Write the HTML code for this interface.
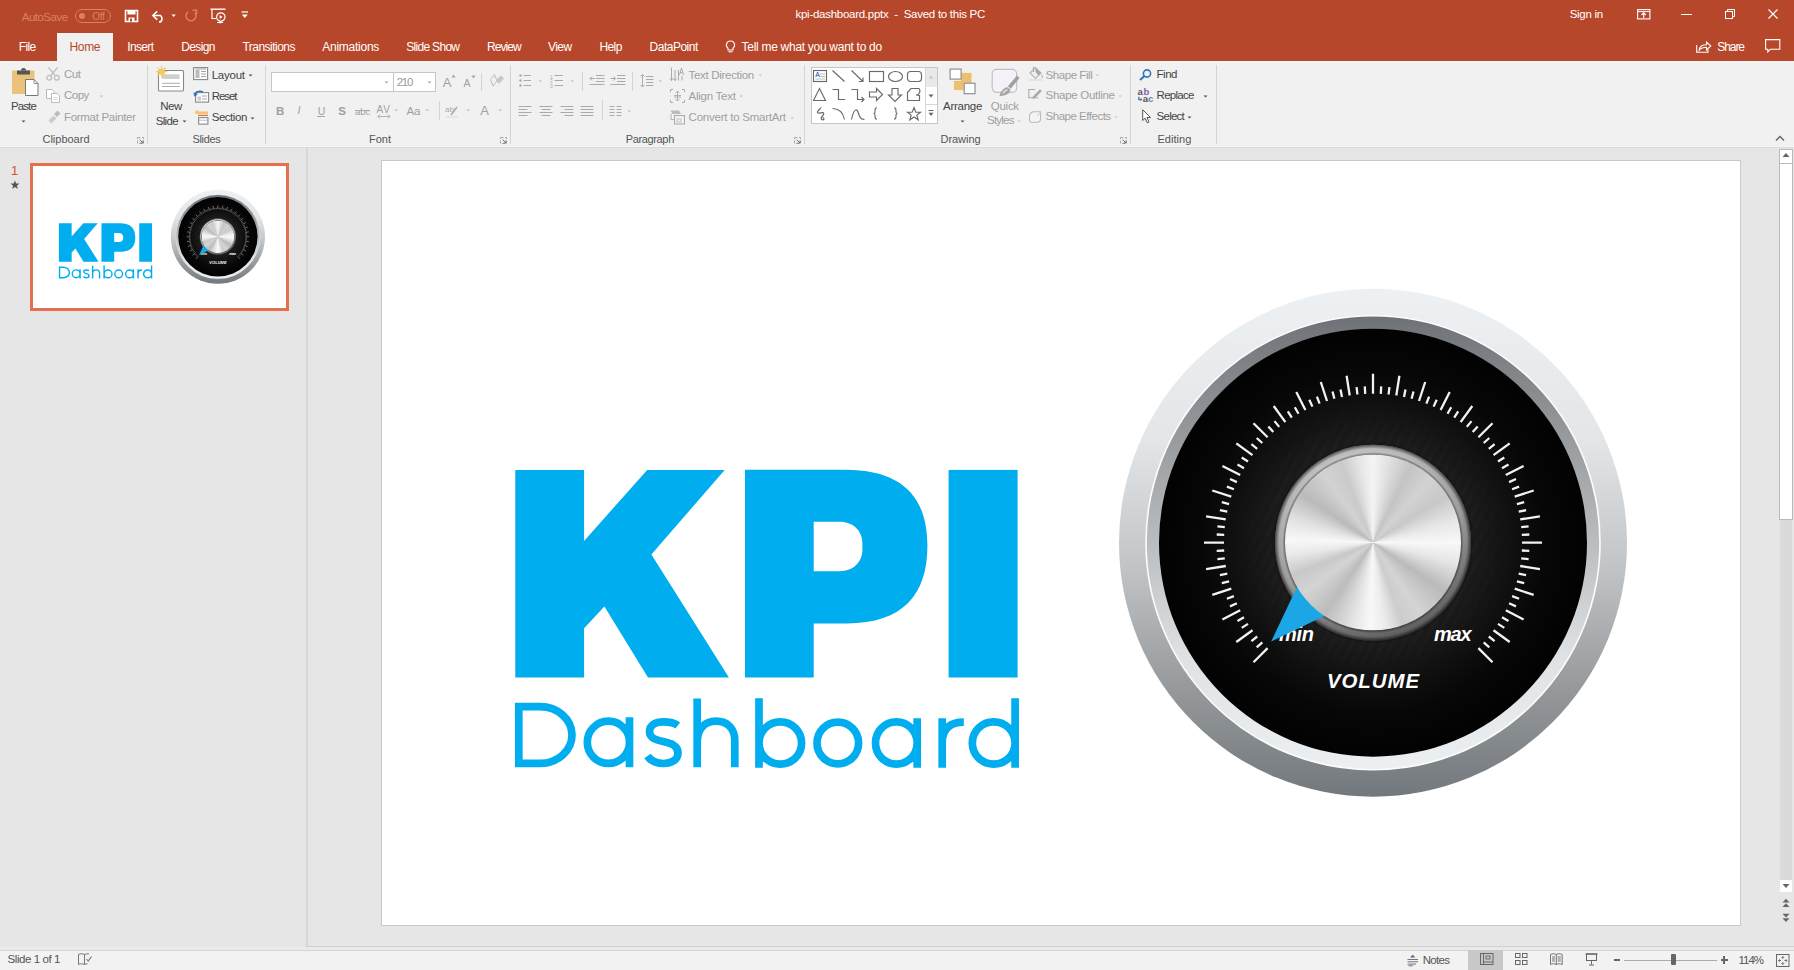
<!DOCTYPE html><html><head><meta charset="utf-8"><style>
*{margin:0;padding:0;box-sizing:border-box}
html,body{width:1794px;height:970px;overflow:hidden;background:#e6e6e6;font-family:"Liberation Sans",sans-serif;font-size:11px;color:#444}
.a{position:absolute;white-space:nowrap}
svg.a{overflow:visible}
</style></head><body><div class="a" style="left:0;top:0;width:1794px;height:61px;background:#b7472a"></div>
<div class="a" style="left:21.8px;top:11.8px;font-size:11.5px;line-height:11.5px;color:#d98166;letter-spacing:-0.52px;">AutoSave</div>
<div class="a" style="left:75px;top:8.5px;width:35.5px;height:14.5px;border:1px solid #d98166;border-radius:8px"></div>
<div class="a" style="left:78.6px;top:12.5px;width:6.5px;height:6.5px;border-radius:50%;background:#d98166"></div>
<div class="a" style="left:92.2px;top:11.9px;font-size:10px;line-height:10px;color:#d98166;letter-spacing:-0.22px;">Off</div>
<svg class="a" style="left:124px;top:9px" width="15" height="14" viewBox="0 0 15 14" ><path d="M1.5,1.5H13.5V12.5H1.5Z" fill="none" stroke="#fff" stroke-width="1.6"/><rect x="3.5" y="1.5" width="8" height="4" fill="#fff"/><rect x="4.5" y="8.5" width="6" height="4" fill="#fff"/><rect x="6" y="9.5" width="2" height="3" fill="#b7472a"/></svg>
<svg class="a" style="left:151px;top:9px" width="27" height="14" viewBox="0 0 27 14" ><path d="M3,6.5H9.5A4.2,4.2 0 0 1 9.5,12.9H8" fill="none" stroke="#fff" stroke-width="1.6"/><path d="M6.2,2.3L1.8,6.5L6.2,10.7" fill="none" stroke="#fff" stroke-width="1.6"/><path d="M20.5,5.5H24.8L22.65,8Z" fill="#fff"/></svg>
<svg class="a" style="left:184px;top:9px" width="14" height="13" viewBox="0 0 14 13" ><path d="M10.8,3.5A5,5 0 1 1 4,2.8" fill="none" stroke="#d98166" stroke-width="1.5"/><path d="M8.5,1.2H12.5V5" fill="none" stroke="#d98166" stroke-width="1.5"/></svg>
<svg class="a" style="left:210px;top:8px" width="17" height="17" viewBox="0 0 17 17" ><path d="M0.5,1.2H15.5" stroke="#fff" stroke-width="1.4"/><path d="M2,1.5V10.5H6" fill="none" stroke="#fff" stroke-width="1.2"/><circle cx="10.8" cy="9" r="4.2" fill="none" stroke="#fff" stroke-width="1.2"/><path d="M9.6,6.9V11.1L12.6,9Z" fill="#fff"/><path d="M7,14.5H13M10,13V15.5" stroke="#fff" stroke-width="1.1"/></svg>
<svg class="a" style="left:241px;top:11px" width="8" height="8" viewBox="0 0 8 8" ><path d="M0.5,1H7" stroke="#fff" stroke-width="1.2"/><path d="M0.8,3.5H6.8L3.8,7Z" fill="#fff"/></svg>
<div class="a" style="left:795.5px;top:9.3px;font-size:11.5px;line-height:11.5px;color:#fff;letter-spacing:-0.27px;">kpi-dashboard.pptx&nbsp; -&nbsp; Saved to this PC</div>
<div class="a" style="left:1569.7px;top:9.3px;font-size:11.5px;line-height:11.5px;color:#fff;letter-spacing:-0.29px;">Sign in</div>
<svg class="a" style="left:1636.5px;top:9px" width="14" height="11" viewBox="0 0 14 11" ><rect x="0.6" y="0.6" width="12.3" height="9.3" fill="none" stroke="#fff" stroke-width="1.1"/><path d="M0.6,2.6H12.9" stroke="#fff" stroke-width="1"/><path d="M6.7,4V9M4.5,6L6.7,3.8L8.9,6" fill="none" stroke="#fff" stroke-width="1.1"/></svg>
<div class="a" style="left:1681px;top:13.5px;width:10.5px;height:1px;background:#fff"></div>
<svg class="a" style="left:1724.5px;top:9px" width="11" height="10" viewBox="0 0 11 10" ><rect x="0.5" y="2.5" width="7" height="7" fill="none" stroke="#fff" stroke-width="1"/><path d="M2.5,2.5V0.5H9.5V7.5H7.5" fill="none" stroke="#fff" stroke-width="1"/></svg>
<svg class="a" style="left:1767.5px;top:9px" width="10" height="10" viewBox="0 0 10 10" ><path d="M0.5,0.5L9.5,9.5M9.5,0.5L0.5,9.5" stroke="#fff" stroke-width="1.1"/></svg>
<div class="a" style="left:57px;top:33px;width:56px;height:29px;background:#f1f1f1"></div>
<div class="a" style="left:18.8px;top:41.2px;font-size:12px;line-height:12px;color:#fff;letter-spacing:-0.64px;">File</div>
<div class="a" style="left:69.5px;top:41.2px;font-size:12px;line-height:12px;color:#b7472a;letter-spacing:-0.35px;">Home</div>
<div class="a" style="left:127.2px;top:41.2px;font-size:12px;line-height:12px;color:#fff;letter-spacing:-0.64px;">Insert</div>
<div class="a" style="left:181.3px;top:41.2px;font-size:12px;line-height:12px;color:#fff;letter-spacing:-0.66px;">Design</div>
<div class="a" style="left:242.5px;top:41.2px;font-size:12px;line-height:12px;color:#fff;letter-spacing:-0.53px;">Transitions</div>
<div class="a" style="left:322.3px;top:41.2px;font-size:12px;line-height:12px;color:#fff;letter-spacing:-0.26px;">Animations</div>
<div class="a" style="left:406.3px;top:41.2px;font-size:12px;line-height:12px;color:#fff;letter-spacing:-0.70px;">Slide Show</div>
<div class="a" style="left:487.0px;top:41.2px;font-size:12px;line-height:12px;color:#fff;letter-spacing:-0.95px;">Review</div>
<div class="a" style="left:548.0px;top:41.2px;font-size:12px;line-height:12px;color:#fff;letter-spacing:-0.57px;">View</div>
<div class="a" style="left:599.4px;top:41.2px;font-size:12px;line-height:12px;color:#fff;letter-spacing:-0.59px;">Help</div>
<div class="a" style="left:649.6px;top:41.2px;font-size:12px;line-height:12px;color:#fff;letter-spacing:-0.51px;">DataPoint</div>
<svg class="a" style="left:724.5px;top:39.5px" width="11" height="14" viewBox="0 0 11 14" ><path d="M5.5,1A4,4 0 0 0 3,8.2V10H8V8.2A4,4 0 0 0 5.5,1Z" fill="none" stroke="#fff" stroke-width="1.1"/><path d="M3.5,11.8H7.5" stroke="#fff" stroke-width="1.1"/></svg>
<div class="a" style="left:741.6px;top:41.2px;font-size:12px;line-height:12px;color:#fff;letter-spacing:-0.29px;">Tell me what you want to do</div>
<svg class="a" style="left:1695.5px;top:39.5px" width="16" height="13" viewBox="0 0 16 13" ><path d="M0.7,5V12.3H12V9.5" fill="none" stroke="#fff" stroke-width="1.1"/><path d="M3.2,10.2C3.5,6.5 6.5,4.8 10.5,4.8V2L14.8,6L10.5,10V7.2C7.5,7.2 5,8 3.2,10.2Z" fill="none" stroke="#fff" stroke-width="1.1"/></svg>
<div class="a" style="left:1717.3px;top:40.7px;font-size:12px;line-height:12px;color:#fff;letter-spacing:-1.07px;">Share</div>
<svg class="a" style="left:1765px;top:39px" width="16" height="14" viewBox="0 0 16 14" ><path d="M0.6,0.6H14.8V10.2H5.5L2.8,13V10.2H0.6Z" fill="none" stroke="#fff" stroke-width="1.1"/></svg>
<div class="a" style="left:0;top:61px;width:1794px;height:85px;background:#f1f1f1"></div>
<div class="a" style="left:0;top:145.5px;width:1794px;height:1.5px;background:#f6f6f6"></div>
<div class="a" style="left:0;top:147px;width:1794px;height:1px;background:#d9d9d9"></div>
<div class="a" style="left:147px;top:65px;width:1px;height:79px;background:#d4d4d4"></div>
<div class="a" style="left:265px;top:65px;width:1px;height:79px;background:#d4d4d4"></div>
<div class="a" style="left:510px;top:65px;width:1px;height:79px;background:#d4d4d4"></div>
<div class="a" style="left:804px;top:65px;width:1px;height:79px;background:#d4d4d4"></div>
<div class="a" style="left:1130px;top:65px;width:1px;height:79px;background:#d4d4d4"></div>
<div class="a" style="left:1216px;top:65px;width:1px;height:79px;background:#d4d4d4"></div>
<div class="a" style="left:42.5px;top:134.0px;font-size:11px;line-height:11px;color:#555;letter-spacing:-0.01px;">Clipboard</div>
<div class="a" style="left:192.5px;top:134.0px;font-size:11px;line-height:11px;color:#555;letter-spacing:-0.36px;">Slides</div>
<div class="a" style="left:369.0px;top:134.0px;font-size:11px;line-height:11px;color:#555;letter-spacing:-0.00px;">Font</div>
<div class="a" style="left:625.7px;top:134.0px;font-size:11px;line-height:11px;color:#555;letter-spacing:-0.35px;">Paragraph</div>
<div class="a" style="left:940.5px;top:134.0px;font-size:11px;line-height:11px;color:#555;letter-spacing:-0.04px;">Drawing</div>
<div class="a" style="left:1157.4px;top:134.0px;font-size:11px;line-height:11px;color:#555;letter-spacing:0.04px;">Editing</div>
<svg class="a" style="left:136.5px;top:136.5px" width="7" height="7" viewBox="0 0 7 7"><path d="M0.5,0.5H6.5V6.5H0.5Z" fill="none" stroke="#999" stroke-width="0.8" stroke-dasharray="3 1.5"/><path d="M2.5,2.5L6,6M3.5,6H6V3.5" fill="none" stroke="#777" stroke-width="1"/></svg>
<svg class="a" style="left:499.5px;top:136.5px" width="7" height="7" viewBox="0 0 7 7"><path d="M0.5,0.5H6.5V6.5H0.5Z" fill="none" stroke="#999" stroke-width="0.8" stroke-dasharray="3 1.5"/><path d="M2.5,2.5L6,6M3.5,6H6V3.5" fill="none" stroke="#777" stroke-width="1"/></svg>
<svg class="a" style="left:794px;top:136.5px" width="7" height="7" viewBox="0 0 7 7"><path d="M0.5,0.5H6.5V6.5H0.5Z" fill="none" stroke="#999" stroke-width="0.8" stroke-dasharray="3 1.5"/><path d="M2.5,2.5L6,6M3.5,6H6V3.5" fill="none" stroke="#777" stroke-width="1"/></svg>
<svg class="a" style="left:1120px;top:136.5px" width="7" height="7" viewBox="0 0 7 7"><path d="M0.5,0.5H6.5V6.5H0.5Z" fill="none" stroke="#999" stroke-width="0.8" stroke-dasharray="3 1.5"/><path d="M2.5,2.5L6,6M3.5,6H6V3.5" fill="none" stroke="#777" stroke-width="1"/></svg>
<svg class="a" style="left:11px;top:67px" width="29" height="30" viewBox="0 0 29 30"><rect x="1" y="3.5" width="22.5" height="23.5" rx="1" fill="#eac27a"/><path d="M6,3.5H19V7.5H6Z" fill="#555"/><path d="M10,3.5A2.5,2.5 0 0 1 15,3.5" fill="#555"/><path d="M14.5,12.5H23L27,16.5V28.5H14.5Z" fill="#fff" stroke="#777" stroke-width="1"/><path d="M23,12.5V16.5H27" fill="none" stroke="#777" stroke-width="0.8"/></svg>
<div class="a" style="left:10.9px;top:100.6px;font-size:11.5px;line-height:11.5px;color:#444;letter-spacing:-0.87px;">Paste</div>
<svg class="a" style="left:20.5px;top:119.8px" width="5.0" height="4.0" viewBox="0 0 5.0 4.0"><path d="M0.5,0.5H4.5L2.50,2.60Z" fill="#555"/></svg>
<svg class="a" style="left:46px;top:66.5px" width="15" height="14" viewBox="0 0 15 14"><circle cx="3.2" cy="10.8" r="2.4" fill="none" stroke="#bbb" stroke-width="1.2"/><circle cx="10.8" cy="10.8" r="2.4" fill="none" stroke="#bbb" stroke-width="1.2"/><path d="M4.5,8.8L11.5,0.5M9.5,8.8L2.5,0.5" stroke="#bbb" stroke-width="1.2"/></svg>
<div class="a" style="left:64.0px;top:69.2px;font-size:11.5px;line-height:11.5px;color:#9f9f9f;letter-spacing:-0.48px;">Cut</div>
<svg class="a" style="left:46px;top:88.5px" width="15" height="14" viewBox="0 0 15 14"><path d="M0.5,0.5H6L8,2.5V9.5H0.5Z" fill="#fff" stroke="#bbb" stroke-width="1"/><path d="M5.5,4.5H11.5L13.5,6.5V13.5H5.5Z" fill="#fff" stroke="#bbb" stroke-width="1"/><path d="M7.5,8.5H11.5M7.5,10.5H11.5" stroke="#ccc" stroke-width="0.8"/></svg>
<div class="a" style="left:64.0px;top:90.1px;font-size:11.5px;line-height:11.5px;color:#9f9f9f;letter-spacing:-0.53px;">Copy</div>
<svg class="a" style="left:98.8px;top:94.6px" width="5.0" height="4.0" viewBox="0 0 5.0 4.0"><path d="M0.5,0.5H4.5L2.50,2.60Z" fill="#c4c4c4"/></svg>
<svg class="a" style="left:47px;top:110px" width="14" height="13" viewBox="0 0 14 13"><path d="M1.5,10.5L6.5,5.5L9.5,8.5L4.5,13.5Z" fill="#ccc"/><path d="M7,4L10.5,0.5L13.5,3.5L10,7Z" fill="#bbb"/></svg>
<div class="a" style="left:64.0px;top:111.8px;font-size:11.5px;line-height:11.5px;color:#9f9f9f;letter-spacing:-0.31px;">Format Painter</div>
<svg class="a" style="left:153px;top:65px" width="33" height="28" viewBox="0 0 33 28"><rect x="5.5" y="5.5" width="25" height="20.5" rx="1" fill="#fff" stroke="#888" stroke-width="1.1"/><rect x="9" y="9.3" width="17.5" height="4.7" fill="#cfcfcf"/><path d="M9,18.3H27M9,21.5H27" stroke="#999" stroke-width="0.8"/><circle cx="8.6" cy="6.7" r="3.3" fill="#f3c96a"/><path d="M8.6,0.8V12.6M2.7,6.7H14.5M4.4,2.5L12.8,10.9M12.8,2.5L4.4,10.9" stroke="#f3c96a" stroke-width="1.1"/></svg>
<div class="a" style="left:160.2px;top:100.5px;font-size:11.5px;line-height:11.5px;color:#444;letter-spacing:-0.40px;">New</div>
<div class="a" style="left:155.8px;top:115.7px;font-size:11.5px;line-height:11.5px;color:#444;letter-spacing:-0.70px;">Slide</div>
<svg class="a" style="left:181.7px;top:119.8px" width="5.0" height="4.0" viewBox="0 0 5.0 4.0"><path d="M0.5,0.5H4.5L2.50,2.60Z" fill="#555"/></svg>
<svg class="a" style="left:193px;top:67px" width="16" height="14" viewBox="0 0 16 14"><rect x="0.6" y="0.6" width="14" height="12" fill="#fff" stroke="#888" stroke-width="1.1"/><rect x="2.5" y="3" width="4" height="8" fill="#bbb"/><path d="M2.5,2H13M8,4.5H13M8,7H13M8,9.5H13" stroke="#999" stroke-width="0.9"/></svg>
<div class="a" style="left:211.7px;top:69.5px;font-size:11.5px;line-height:11.5px;color:#444;letter-spacing:-0.24px;">Layout</div>
<svg class="a" style="left:248.0px;top:74.3px" width="5.0" height="4.0" viewBox="0 0 5.0 4.0"><path d="M0.5,0.5H4.5L2.50,2.60Z" fill="#555"/></svg>
<svg class="a" style="left:192.5px;top:88.5px" width="17" height="14" viewBox="0 0 17 14"><rect x="2.6" y="3.6" width="13" height="9.5" fill="#fff" stroke="#888" stroke-width="1.1"/><path d="M9,7H14M9,10H14" stroke="#999" stroke-width="0.9"/><rect x="4.5" y="7.5" width="3.5" height="4" fill="#ccc"/><path d="M1.5,6.5A5.5,4.5 0 0 1 10,3" fill="none" stroke="#2e75b6" stroke-width="1.6"/><path d="M0.3,3.5L1.8,7.8L5,5Z" fill="#2e75b6"/></svg>
<div class="a" style="left:211.7px;top:90.8px;font-size:11.5px;line-height:11.5px;color:#444;letter-spacing:-1.05px;">Reset</div>
<svg class="a" style="left:193.5px;top:109.5px" width="15" height="15" viewBox="0 0 15 15"><circle cx="2.8" cy="2.2" r="2" fill="#f3c96a"/><rect x="4" y="1.5" width="10" height="3" fill="#f0c27b"/><path d="M4,5.5H14" stroke="#d9534f" stroke-width="0.9"/><rect x="4.6" y="7.6" width="9.3" height="6.5" fill="#fff" stroke="#888" stroke-width="1.1"/><path d="M5,10.2H13.5" stroke="#aaa" stroke-width="0.8"/></svg>
<div class="a" style="left:211.7px;top:112.4px;font-size:11.5px;line-height:11.5px;color:#444;letter-spacing:-0.46px;">Section</div>
<svg class="a" style="left:250.3px;top:117.2px" width="5.0" height="4.0" viewBox="0 0 5.0 4.0"><path d="M0.5,0.5H4.5L2.50,2.60Z" fill="#555"/></svg>
<div class="a" style="left:270.5px;top:71.5px;width:123px;height:20.5px;background:#fff;border:1px solid #c6c6c6"></div>
<div class="a" style="left:392.5px;top:71.5px;width:43px;height:20.5px;background:#fff;border:1px solid #c6c6c6"></div>
<svg class="a" style="left:383.7px;top:80.5px" width="5.0" height="4.0" viewBox="0 0 5.0 4.0"><path d="M0.5,0.5H4.5L2.50,2.60Z" fill="#aaa"/></svg>
<svg class="a" style="left:426.9px;top:80.5px" width="5.0" height="4.0" viewBox="0 0 5.0 4.0"><path d="M0.5,0.5H4.5L2.50,2.60Z" fill="#aaa"/></svg>
<div class="a" style="left:396.7px;top:76.6px;font-size:11.5px;line-height:11.5px;color:#999;letter-spacing:-1.28px;">210</div>
<div class="a" style="left:442.7px;top:76.0px;font-size:13px;line-height:13px;color:#9f9f9f;">A</div>
<svg class="a" style="left:450.5px;top:74px" width="5" height="4" viewBox="0 0 5 4"><path d="M0.3,3.5L2.5,0.5L4.7,3.5Z" fill="#aaa"/></svg>
<div class="a" style="left:463.6px;top:78.1px;font-size:10.5px;line-height:10.5px;color:#9f9f9f;">A</div>
<svg class="a" style="left:470.5px;top:75px" width="5" height="4" viewBox="0 0 5 4"><path d="M0.3,0.5L2.5,3.5L4.7,0.5Z" fill="#aaa"/></svg>
<div class="a" style="left:481.4px;top:72.5px;width:1px;height:18.799999999999997px;background:#d4d4d4"></div>
<svg class="a" style="left:489.5px;top:74px" width="15" height="13" viewBox="0 0 15 13"><path d="M3,12L0.5,5.5L4.5,0.5L7,7Z" fill="none" stroke="#bbb" stroke-width="1"/><path d="M6,6L11,1.5L14,4.5L9,10Z" fill="#c8c8c8"/></svg>
<div class="a" style="left:276.1px;top:105.6px;font-size:11.5px;line-height:11.5px;color:#9f9f9f;font-weight:bold;">B</div>
<div class="a" style="left:297.5px;top:105.4px;font-size:11px;line-height:11px;color:#9f9f9f;font-style:italic">I</div>
<div class="a" style="left:317.8px;top:105.9px;font-size:10.5px;line-height:10.5px;color:#9f9f9f;">U</div>
<div class="a" style="left:317.3px;top:115.5px;width:7.6px;height:1px;background:#aaa"></div>
<div class="a" style="left:338.2px;top:105.6px;font-size:11.5px;line-height:11.5px;color:#9f9f9f;font-weight:bold;">S</div>
<div class="a" style="left:354.9px;top:106.8px;font-size:9.5px;line-height:9.5px;color:#9f9f9f;letter-spacing:-0.01px;">abc</div>
<div class="a" style="left:354.5px;top:109.5px;width:15.5px;height:1px;background:#aaa"></div>
<div class="a" style="left:376.5px;top:104.8px;font-size:10px;line-height:10px;color:#9f9f9f;letter-spacing:0.87px;">AV</div>
<svg class="a" style="left:376.5px;top:113.5px" width="14" height="5" viewBox="0 0 14 5"><path d="M1,2.5H13M3,0.5L1,2.5L3,4.5M11,0.5L13,2.5L11,4.5" fill="none" stroke="#aaa" stroke-width="0.9"/></svg>
<svg class="a" style="left:394.45px;top:108.8px" width="4.5" height="3.5" viewBox="0 0 4.5 3.5"><path d="M0.5,0.5H4.0L2.25,2.35Z" fill="#bbb"/></svg>
<div class="a" style="left:406.4px;top:105.6px;font-size:11.5px;line-height:11.5px;color:#9f9f9f;letter-spacing:-0.04px;">Aa</div>
<svg class="a" style="left:425.05px;top:108.8px" width="4.5" height="3.5" viewBox="0 0 4.5 3.5"><path d="M0.5,0.5H4.0L2.25,2.35Z" fill="#bbb"/></svg>
<div class="a" style="left:438.5px;top:101px;width:1px;height:19px;background:#d4d4d4"></div>
<svg class="a" style="left:445px;top:104.5px" width="14" height="14" viewBox="0 0 14 14"><text x="0" y="7" font-size="8" fill="#aaa" font-family="Liberation Sans">ab</text><path d="M6,10L12,2" stroke="#aaa" stroke-width="1.6"/><rect x="1" y="11" width="12" height="2" fill="#e4e4e4"/></svg>
<svg class="a" style="left:466.25px;top:108.8px" width="4.5" height="3.5" viewBox="0 0 4.5 3.5"><path d="M0.5,0.5H4.0L2.25,2.35Z" fill="#bbb"/></svg>
<div class="a" style="left:480.3px;top:104.3px;font-size:13px;line-height:13px;color:#9f9f9f;">A</div>
<svg class="a" style="left:498.25px;top:108.8px" width="4.5" height="3.5" viewBox="0 0 4.5 3.5"><path d="M0.5,0.5H4.0L2.25,2.35Z" fill="#bbb"/></svg>
<svg class="a" style="left:519px;top:74px" width="13" height="13" viewBox="0 0 13 13"><circle cx="1.5" cy="1.5" r="1.2" fill="#aaa"/><circle cx="1.5" cy="6.5" r="1.2" fill="#aaa"/><circle cx="1.5" cy="11.5" r="1.2" fill="#aaa"/><path d="M4.5,1.5H12M4.5,6.5H12M4.5,11.5H12" stroke="#aaa" stroke-width="1"/></svg>
<svg class="a" style="left:537.85px;top:80px" width="4.5" height="3.5" viewBox="0 0 4.5 3.5"><path d="M0.5,0.5H4.0L2.25,2.35Z" fill="#bbb"/></svg>
<svg class="a" style="left:550px;top:74px" width="14" height="14" viewBox="0 0 14 14"><text x="0" y="4.5" font-size="5" fill="#aaa">1</text><text x="0" y="9.2" font-size="5" fill="#aaa">2</text><text x="0" y="14" font-size="5" fill="#aaa">3</text><path d="M4.5,1.5H13M4.5,6.5H13M4.5,11.5H13" stroke="#aaa" stroke-width="1"/></svg>
<svg class="a" style="left:569.95px;top:80px" width="4.5" height="3.5" viewBox="0 0 4.5 3.5"><path d="M0.5,0.5H4.0L2.25,2.35Z" fill="#bbb"/></svg>
<div class="a" style="left:582.4px;top:72px;width:1px;height:19px;background:#d4d4d4"></div>
<svg class="a" style="left:589px;top:74px" width="16" height="13" viewBox="0 0 16 13"><path d="M7,1.5H15.5M7,4.5H15.5M7,7.5H15.5M0.5,10.5H15.5M1,4.5H6M3,2.5L1,4.5L3,6.5" fill="none" stroke="#aaa" stroke-width="1"/></svg>
<svg class="a" style="left:610px;top:74px" width="16" height="13" viewBox="0 0 16 13"><path d="M7,1.5H15.5M7,4.5H15.5M7,7.5H15.5M0.5,10.5H15.5M0.5,4.5H5.5M3.5,2.5L5.5,4.5L3.5,6.5" fill="none" stroke="#aaa" stroke-width="1"/></svg>
<div class="a" style="left:632px;top:72px;width:1px;height:19px;background:#d4d4d4"></div>
<svg class="a" style="left:640px;top:74px" width="14" height="14" viewBox="0 0 14 14"><path d="M2.5,0.5V13M0.5,2.5L2.5,0.5L4.5,2.5M0.5,11L2.5,13L4.5,11M6,2.5H13.5M6,5.5H13.5M6,8.5H13.5M6,11.5H13.5" fill="none" stroke="#aaa" stroke-width="1"/></svg>
<svg class="a" style="left:658.25px;top:80px" width="4.5" height="3.5" viewBox="0 0 4.5 3.5"><path d="M0.5,0.5H4.0L2.25,2.35Z" fill="#bbb"/></svg>
<svg class="a" style="left:518.4px;top:104.5px" width="14" height="12" viewBox="0 0 14 12"><path d="M0.5,1.5H13.5" stroke="#aaa" stroke-width="1"/><path d="M0.5,4.5H9.5" stroke="#aaa" stroke-width="1"/><path d="M0.5,7.5H13.5" stroke="#aaa" stroke-width="1"/><path d="M0.5,10.5H9.5" stroke="#aaa" stroke-width="1"/></svg>
<svg class="a" style="left:538.8px;top:104.5px" width="14" height="12" viewBox="0 0 14 12"><path d="M0.5,1.5H13.5" stroke="#aaa" stroke-width="1"/><path d="M2.5,4.5H11.5" stroke="#aaa" stroke-width="1"/><path d="M0.5,7.5H13.5" stroke="#aaa" stroke-width="1"/><path d="M2.5,10.5H11.5" stroke="#aaa" stroke-width="1"/></svg>
<svg class="a" style="left:559.8px;top:104.5px" width="14" height="12" viewBox="0 0 14 12"><path d="M0.5,1.5H13.5" stroke="#aaa" stroke-width="1"/><path d="M4.5,4.5H13.5" stroke="#aaa" stroke-width="1"/><path d="M0.5,7.5H13.5" stroke="#aaa" stroke-width="1"/><path d="M4.5,10.5H13.5" stroke="#aaa" stroke-width="1"/></svg>
<svg class="a" style="left:579.9px;top:104.5px" width="14" height="12" viewBox="0 0 14 12"><path d="M0.5,1.5H13.5" stroke="#aaa" stroke-width="1"/><path d="M0.5,4.5H13.5" stroke="#aaa" stroke-width="1"/><path d="M0.5,7.5H13.5" stroke="#aaa" stroke-width="1"/><path d="M0.5,10.5H13.5" stroke="#aaa" stroke-width="1"/></svg>
<div class="a" style="left:601.5px;top:100px;width:1px;height:20px;background:#d4d4d4"></div>
<svg class="a" style="left:609px;top:104.5px" width="14" height="12" viewBox="0 0 14 12"><path d="M0.5,1.5H5.5M0.5,4.5H5.5M0.5,7.5H5.5M0.5,10.5H5.5M7.5,1.5H12.5M7.5,4.5H12.5M7.5,7.5H12.5M7.5,10.5H12.5" stroke="#aaa" stroke-width="1"/></svg>
<svg class="a" style="left:626.75px;top:110px" width="4.5" height="3.5" viewBox="0 0 4.5 3.5"><path d="M0.5,0.5H4.0L2.25,2.35Z" fill="#bbb"/></svg>
<svg class="a" style="left:670px;top:67px" width="15" height="14" viewBox="0 0 15 14"><path d="M1.5,0.5V13.5M5,3V13.5M8.5,3V13.5M0,11.5L1.5,13.5L3,11.5M3.5,11.5L5,13.5L6.5,11.5" fill="none" stroke="#aaa" stroke-width="1"/><path d="M9.5,8L11.5,1L13.5,8M10.2,5.5H12.8" fill="none" stroke="#aaa" stroke-width="1"/><path d="M12,9V13.5" stroke="#aaa" stroke-width="1"/></svg>
<div class="a" style="left:688.6px;top:69.6px;font-size:11.5px;line-height:11.5px;color:#9f9f9f;letter-spacing:-0.31px;">Text Direction</div>
<svg class="a" style="left:757.75px;top:74.3px" width="4.5" height="3.5" viewBox="0 0 4.5 3.5"><path d="M0.5,0.5H4.0L2.25,2.35Z" fill="#c4c4c4"/></svg>
<svg class="a" style="left:670px;top:88.5px" width="15" height="14" viewBox="0 0 15 14"><path d="M0.5,3V0.5H3M12,0.5H14.5V3M14.5,11V13.5H12M3,13.5H0.5V11" fill="none" stroke="#aaa" stroke-width="1"/><path d="M7.5,2V12M5.5,4L7.5,2L9.5,4M5.5,10L7.5,12L9.5,10M4,6.5H11M4,8H11" fill="none" stroke="#aaa" stroke-width="0.9"/></svg>
<div class="a" style="left:688.6px;top:90.5px;font-size:11.5px;line-height:11.5px;color:#9f9f9f;letter-spacing:-0.26px;">Align Text</div>
<svg class="a" style="left:739.35px;top:95px" width="4.5" height="3.5" viewBox="0 0 4.5 3.5"><path d="M0.5,0.5H4.0L2.25,2.35Z" fill="#c4c4c4"/></svg>
<svg class="a" style="left:670px;top:109.5px" width="15" height="15" viewBox="0 0 15 15"><path d="M0.5,0.5H9L11,4H2.5Z" fill="#bbb"/><rect x="4.5" y="5.5" width="10" height="8.5" fill="none" stroke="#aaa" stroke-width="1"/><path d="M1,4V9.5H4.5" fill="none" stroke="#aaa" stroke-width="0.9"/><rect x="7" y="9" width="4" height="3" fill="none" stroke="#bbb" stroke-width="0.8"/></svg>
<div class="a" style="left:688.6px;top:112.3px;font-size:11.5px;line-height:11.5px;color:#9f9f9f;letter-spacing:-0.23px;">Convert to SmartArt</div>
<svg class="a" style="left:789.55px;top:116.5px" width="4.5" height="3.5" viewBox="0 0 4.5 3.5"><path d="M0.5,0.5H4.0L2.25,2.35Z" fill="#c4c4c4"/></svg>
<div class="a" style="left:810.5px;top:66.7px;width:127px;height:57px;background:#fff;border:1px solid #c6c6c6"></div>
<div class="a" style="left:924.5px;top:67.5px;width:12px;height:19px;background:#e9e9e9;border-left:1px solid #d6d6d6"></div>
<div class="a" style="left:924.5px;top:86.5px;width:12px;height:36.5px;border-left:1px solid #d6d6d6"></div>
<div class="a" style="left:925px;top:104.3px;width:12px;height:1px;background:#d6d6d6"></div>
<svg class="a" style="left:927.5px;top:74.5px" width="6" height="4" viewBox="0 0 6 4"><path d="M0.5,3.5L3,0.5L5.5,3.5Z" fill="#c8c8c8"/></svg>
<svg class="a" style="left:927.5px;top:93.5px" width="6" height="4" viewBox="0 0 6 4"><path d="M0.5,0.5L3,3.5L5.5,0.5Z" fill="#666"/></svg>
<svg class="a" style="left:927.5px;top:110px" width="6" height="7" viewBox="0 0 6 7"><path d="M0.5,0.5H5.5" stroke="#666" stroke-width="1"/><path d="M0.5,2.8L3,6L5.5,2.8Z" fill="#666"/></svg>
<svg class="a" style="left:812.7px;top:69.6px" width="15" height="14" viewBox="0 0 15 14"><rect x="0.5" y="0.5" width="13" height="11" fill="none" stroke="#6a6a6a" stroke-width="1.15"/><text x="2" y="7" font-size="7" fill="#4a7ebb" font-weight="bold">A</text><path d="M7,4H12M7,6.5H12M2.5,9H12" stroke="#aaa" stroke-width="0.8"/></svg>
<svg class="a" style="left:831.7px;top:69.6px" width="15" height="14" viewBox="0 0 15 14"><path d="M0.5,0.5L12.5,11.5" stroke="#6a6a6a" stroke-width="1.15"/></svg>
<svg class="a" style="left:850.7px;top:69.6px" width="15" height="14" viewBox="0 0 15 14"><path d="M0.5,0.5L12,11.5M8,11.5H12V7.5" fill="none" stroke="#6a6a6a" stroke-width="1.15"/></svg>
<svg class="a" style="left:869.4px;top:69.6px" width="15" height="14" viewBox="0 0 15 14"><rect x="0.5" y="1.5" width="14" height="10" fill="none" stroke="#6a6a6a" stroke-width="1.15"/></svg>
<svg class="a" style="left:887.8px;top:69.6px" width="15" height="14" viewBox="0 0 15 14"><ellipse cx="7.5" cy="6.5" rx="7" ry="5" fill="none" stroke="#6a6a6a" stroke-width="1.15"/></svg>
<svg class="a" style="left:906.5px;top:69.6px" width="15" height="14" viewBox="0 0 15 14"><rect x="0.5" y="1.5" width="14" height="10" rx="3" fill="none" stroke="#6a6a6a" stroke-width="1.15"/></svg>
<svg class="a" style="left:812.7px;top:88.4px" width="15" height="14" viewBox="0 0 15 14"><path d="M6.5,0.5L12.5,12.5H0.5Z" fill="none" stroke="#6a6a6a" stroke-width="1.15"/></svg>
<svg class="a" style="left:831.7px;top:88.4px" width="15" height="14" viewBox="0 0 15 14"><path d="M0.5,1.5H6.5V11.5H13" fill="none" stroke="#6a6a6a" stroke-width="1.15"/></svg>
<svg class="a" style="left:850.7px;top:88.4px" width="15" height="14" viewBox="0 0 15 14"><path d="M0.5,1.5H6.5V11.5H13M10.5,9L13,11.5L10.5,14" fill="none" stroke="#6a6a6a" stroke-width="1.15"/></svg>
<svg class="a" style="left:869.4px;top:88.4px" width="15" height="14" viewBox="0 0 15 14"><path d="M0.5,4H7.5V0.5L13.5,6.5L7.5,12.5V9H0.5Z" fill="none" stroke="#6a6a6a" stroke-width="1.15"/></svg>
<svg class="a" style="left:887.8px;top:88.4px" width="15" height="14" viewBox="0 0 15 14"><path d="M4,0.5H10V7H13.5L7,13.5L0.5,7H4Z" fill="none" stroke="#6a6a6a" stroke-width="1.15"/></svg>
<svg class="a" style="left:906.5px;top:88.4px" width="15" height="14" viewBox="0 0 15 14"><path d="M0.5,4.5L4,0.5H12A4,4 0 0 1 9,7L12.5,7.5V12.5H0.5Z" fill="none" stroke="#6a6a6a" stroke-width="1.15"/></svg>
<svg class="a" style="left:812.7px;top:107.0px" width="15" height="14" viewBox="0 0 15 14"><path d="M8.2,0.5C7,2 4,3.8 4.5,5.5C5,7 8.5,5.2 10,5.6C11.5,6.2 10.5,8 9,9.5C7.5,11 8,13 10,12.8C11.5,12.5 11,10.5 9.5,10.8" fill="none" stroke="#6a6a6a" stroke-width="1.2"/></svg>
<svg class="a" style="left:831.7px;top:107.0px" width="15" height="14" viewBox="0 0 15 14"><path d="M0.5,1.5C6,1.5 11,5 12.5,12.5" fill="none" stroke="#6a6a6a" stroke-width="1.15"/></svg>
<svg class="a" style="left:850.7px;top:107.0px" width="15" height="14" viewBox="0 0 15 14"><path d="M0.5,12.5C3,1 6,1 7.5,6.5C9,12 11,12.5 13.5,12.5" fill="none" stroke="#6a6a6a" stroke-width="1.15"/></svg>
<svg class="a" style="left:869.4px;top:107.0px" width="15" height="14" viewBox="0 0 15 14"><path d="M8,0.8C6,0.8 6,1.8 6,3.5V5C6,6 5.5,6.5 4.5,6.5C5.5,6.5 6,7 6,8V9.5C6,11.2 6,12.2 8,12.2" fill="none" stroke="#6a6a6a" stroke-width="1.1"/></svg>
<svg class="a" style="left:887.8px;top:107.0px" width="15" height="14" viewBox="0 0 15 14"><path d="M6,0.8C8,0.8 8,1.8 8,3.5V5C8,6 8.5,6.5 9.5,6.5C8.5,6.5 8,7 8,8V9.5C8,11.2 8,12.2 6,12.2" fill="none" stroke="#6a6a6a" stroke-width="1.1"/></svg>
<svg class="a" style="left:906.5px;top:107.0px" width="15" height="14" viewBox="0 0 15 14"><path d="M7,0.5L8.8,5.2H13.5L9.8,8.1L11.2,12.8L7,10L2.8,12.8L4.2,8.1L0.5,5.2H5.2Z" fill="none" stroke="#6a6a6a" stroke-width="1.15"/></svg>
<svg class="a" style="left:948.5px;top:67.5px" width="27" height="27" viewBox="0 0 27 27"><rect x="12" y="4.9" width="10.5" height="9.8" fill="#ecc06f"/><rect x="4.9" y="12.9" width="9.8" height="9.2" fill="#ecc06f"/><rect x="1.1" y="1.1" width="11" height="10" fill="#fff" stroke="#888" stroke-width="1.1"/><rect x="15.2" y="15.2" width="10.8" height="10.5" fill="#fff" stroke="#888" stroke-width="1.1"/></svg>
<div class="a" style="left:943.0px;top:100.7px;font-size:11.5px;line-height:11.5px;color:#444;letter-spacing:-0.26px;">Arrange</div>
<svg class="a" style="left:960.3px;top:119.6px" width="5.0" height="4.0" viewBox="0 0 5.0 4.0"><path d="M0.5,0.5H4.5L2.50,2.60Z" fill="#555"/></svg>
<svg class="a" style="left:991px;top:68px" width="30" height="30" viewBox="0 0 30 30"><rect x="1.2" y="1.3" width="24.5" height="23" rx="4.5" fill="#f6f1f8" stroke="#c6bec6" stroke-width="1.2"/><path d="M28.5,10L19.8,20.8L16.8,18.2L26,7.5Z" fill="#a0a0a0"/><path d="M8.5,28.2C9.5,23 12.5,19.8 16.6,19.3L19.4,21.6C19.4,25.5 15.5,27.8 8.5,28.2Z" fill="#a6a6a6"/><path d="M12,25.5C13,23.5 14.5,22 16.5,21.6" fill="none" stroke="#e6e6e6" stroke-width="1.2"/></svg>
<div class="a" style="left:990.8px;top:100.7px;font-size:11.5px;line-height:11.5px;color:#9f9f9f;letter-spacing:-0.27px;">Quick</div>
<div class="a" style="left:987.0px;top:115.4px;font-size:11.5px;line-height:11.5px;color:#9f9f9f;letter-spacing:-0.78px;">Styles</div>
<svg class="a" style="left:1017.35px;top:119.8px" width="4.5" height="3.5" viewBox="0 0 4.5 3.5"><path d="M0.5,0.5H4.0L2.25,2.35Z" fill="#c4c4c4"/></svg>
<svg class="a" style="left:1027.5px;top:66px" width="16" height="15" viewBox="0 0 16 15"><path d="M2,7L7.5,1.5L13,7L7.5,12.5Z" fill="#f2eef4" stroke="#b4b4b4" stroke-width="1.1"/><path d="M7.5,1.5L13,7L10.5,9.5L7.5,6Z" fill="#a8a8a8"/><path d="M5.5,0.8V6" stroke="#aaa" stroke-width="1.2"/><path d="M13.5,8.5C14.5,10 14.8,11 14,12" fill="none" stroke="#b8b8b8" stroke-width="1.2"/><rect x="1" y="13" width="13.5" height="1.8" fill="#e2e2e2"/></svg>
<div class="a" style="left:1045.6px;top:69.6px;font-size:11.5px;line-height:11.5px;color:#9f9f9f;letter-spacing:-0.45px;">Shape Fill</div>
<svg class="a" style="left:1095.25px;top:74.3px" width="4.5" height="3.5" viewBox="0 0 4.5 3.5"><path d="M0.5,0.5H4.0L2.25,2.35Z" fill="#c8c8c8"/></svg>
<svg class="a" style="left:1027.5px;top:88px" width="15" height="11" viewBox="0 0 15 11"><path d="M7,1.5H0.8V9.8H10" fill="none" stroke="#aaa" stroke-width="1.1"/><path d="M5,8.5L12,1.2L13.8,3L6.8,10.2L4.5,10.8Z" fill="#a8a8a8"/></svg>
<div class="a" style="left:1045.6px;top:90.2px;font-size:11.5px;line-height:11.5px;color:#9f9f9f;letter-spacing:-0.30px;">Shape Outline</div>
<svg class="a" style="left:1118.05px;top:94.5px" width="4.5" height="3.5" viewBox="0 0 4.5 3.5"><path d="M0.5,0.5H4.0L2.25,2.35Z" fill="#c8c8c8"/></svg>
<svg class="a" style="left:1028px;top:110.5px" width="14" height="12" viewBox="0 0 14 12"><path d="M1.5,5.5C1.5,2.5 3.5,0.8 6.5,0.8H12.5V8C12.5,10 11,11.2 9,11.2H3.5C2.2,11.2 1.5,10 1.5,8.8Z" fill="#f4f4f4" stroke="#bbb" stroke-width="1.1"/><path d="M12.5,1L9,5" stroke="#ccc" stroke-width="1"/></svg>
<div class="a" style="left:1045.6px;top:111.4px;font-size:11.5px;line-height:11.5px;color:#9f9f9f;letter-spacing:-0.49px;">Shape Effects</div>
<svg class="a" style="left:1113.65px;top:115.8px" width="4.5" height="3.5" viewBox="0 0 4.5 3.5"><path d="M0.5,0.5H4.0L2.25,2.35Z" fill="#c8c8c8"/></svg>
<svg class="a" style="left:1138.5px;top:68.5px" width="13" height="12" viewBox="0 0 13 12"><circle cx="8" cy="4.5" r="3.6" fill="none" stroke="#2e75b6" stroke-width="1.6"/><path d="M5.5,7L1,11" stroke="#2e75b6" stroke-width="2"/></svg>
<div class="a" style="left:1156.6px;top:69.1px;font-size:11.5px;line-height:11.5px;color:#444;letter-spacing:-0.51px;">Find</div>
<svg class="a" style="left:1137px;top:87px" width="17" height="16" viewBox="0 0 17 16"><g font-family="Liberation Sans" font-weight="bold" font-size="9.5"><text x="0.6" y="8.3" fill="#5a5a5a">a</text><text x="6.4" y="8.3" fill="#8e5bb5">b</text><text x="5.8" y="14.9" fill="#555">a</text><text x="11" y="14.9" fill="#6088ad">c</text></g><path d="M1.8,9.8V12.6H4.2" fill="none" stroke="#4a78a8" stroke-width="1.3"/><path d="M3.5,10.8L5.3,12.6L3.5,14.4Z" fill="#4a78a8"/></svg>
<div class="a" style="left:1156.6px;top:90.2px;font-size:11.5px;line-height:11.5px;color:#444;letter-spacing:-0.75px;">Replace</div>
<svg class="a" style="left:1203.1px;top:94.6px" width="5.0" height="4.0" viewBox="0 0 5.0 4.0"><path d="M0.5,0.5H4.5L2.50,2.60Z" fill="#555"/></svg>
<svg class="a" style="left:1141.5px;top:109px" width="10" height="15" viewBox="0 0 10 15"><path d="M0.7,0.7V11.5L3.2,9.2L5.2,13.8L7,13L5,8.5H8.5Z" fill="#fff" stroke="#555" stroke-width="1"/></svg>
<div class="a" style="left:1156.6px;top:111.4px;font-size:11.5px;line-height:11.5px;color:#444;letter-spacing:-0.76px;">Select</div>
<svg class="a" style="left:1187.0px;top:116px" width="5.0" height="4.0" viewBox="0 0 5.0 4.0"><path d="M0.5,0.5H4.5L2.50,2.60Z" fill="#555"/></svg>
<svg class="a" style="left:1775px;top:135px" width="10" height="7" viewBox="0 0 10 7"><path d="M1,5.5L5,1.5L9,5.5" fill="none" stroke="#666" stroke-width="1.5"/></svg>
<div class="a" style="left:306px;top:148px;width:2px;height:799px;background:#d6d6d6"></div>
<div class="a" style="left:381px;top:160px;width:1360px;height:766px;background:#fff;border:1px solid #c9c9c9"></div>
<div class="a" style="left:1780px;top:520px;width:12px;height:360px;background:#dadada"></div>
<div class="a" style="left:1779px;top:149px;width:14px;height:15px;background:#fff;border:1px solid #b9b9b9"></div>
<div class="a" style="left:1779px;top:163px;width:14px;height:357px;background:#fff;border:1px solid #b9b9b9"></div>
<div class="a" style="left:1780px;top:880px;width:12px;height:12px;background:#fff"></div>
<div class="a" style="left:30px;top:163.3px;width:258.8px;height:147.7px;border:3px solid #e4704e;background:#fff"></div>
<div class="a" style="left:11.0px;top:164.2px;font-size:13px;line-height:13px;color:#d35230;">1</div><svg class="a" style="left:381.00px;top:160.50px" width="1360.00" height="765.00" viewBox="381 160.5 1360 765"><path fill="#00adef" d="M515.3,469.4H584.1V540.4L647.2,469.4H724.7L651.4,554L728.9,677H648L604.4,605.9L584.1,627.7V677H515.3Z"/>
<path fill="#00adef" fill-rule="evenodd" d="M745,469.2H845C903,469.2 927.4,497 927.4,545.5C927.4,594 903,622.9 847,622.9H813.7V677H745Z M813.7,521.3H839.5C853.5,521.3 862.4,530.5 862.4,543V549C862.4,561.5 853.5,570.7 839.5,570.7H813.7Z"/>
<rect fill="#00adef" x="948.6" y="469.4" width="69" height="207.6"/>
<path fill="none" stroke="#00adef" stroke-width="7.7" d="M518.8,706.2V762.9H540A32,28.35 0 0 0 540,706.2Z M629.5,716.8V766.8 M629.5,741.8A21.1,21.1 0 1 1 587.3,741.8A21.1,21.1 0 1 1 629.5,741.8 M677.8,725C674.5,722.5 669,721.4 663.5,721.4C655,721.4 649.5,725 649.5,731C649.5,745 678,737 678,752.5C678,759 672,763 663.5,763C656,763 650.5,760 647.5,755.5 M697.2,698V766.8 M697.2,742C697.2,728 705,720.7 716,720.7C727.5,720.7 734.8,728 734.8,740V766.8 M759,697.8V767.3 M759,742.5A21.3,21.1 0 1 1 801.6,742.5A21.3,21.1 0 1 1 759,742.5 M858.6,742.5A20.8,20.8 0 1 1 817,742.5A20.8,20.8 0 1 1 858.6,742.5 M917.2,717.8V767.3 M917.2,742.5A20.85,21.1 0 1 1 875.5,742.5A20.85,21.1 0 1 1 917.2,742.5 M942.2,717.8V767.3 M942.2,742C942.2,728 950,721.6 963.8,721.6 M1015.1,697.8V767.3 M1015.1,742.5A21.4,21.1 0 1 1 972.3,742.5A21.4,21.1 0 1 1 1015.1,742.5"/><defs>
<linearGradient id="r1m" x1="0" y1="0" x2="0" y2="1">
<stop offset="0" stop-color="#eef1f3"/><stop offset="0.3" stop-color="#e3e6e8"/><stop offset="0.55" stop-color="#c1c4c7"/><stop offset="0.8" stop-color="#93979a"/><stop offset="1" stop-color="#73787c"/></linearGradient>
<linearGradient id="r2m" x1="0" y1="0" x2="0" y2="1">
<stop offset="0" stop-color="#6e7276"/><stop offset="0.45" stop-color="#b3b6b9"/><stop offset="0.75" stop-color="#dfe2e4"/><stop offset="1" stop-color="#edf0f2"/></linearGradient>
<radialGradient id="fcm" cx="0.5" cy="0.5" r="0.5">
<stop offset="0" stop-color="#262626"/><stop offset="0.45" stop-color="#1c1c1c"/><stop offset="0.62" stop-color="#121212"/><stop offset="0.8" stop-color="#070707"/><stop offset="1" stop-color="#020202"/></radialGradient>
<pattern id="stm" width="9" height="400" patternUnits="userSpaceOnUse" patternTransform="rotate(28)">
<rect x="0" y="0" width="4" height="400" fill="#ffffff" fill-opacity="0.02"/></pattern>
<radialGradient id="smgm" cx="0.5" cy="0.5" r="0.5"><stop offset="0.4" stop-color="#fff"/><stop offset="0.75" stop-color="#000"/></radialGradient><mask id="smm"><circle cx="1373" cy="542.2" r="214" fill="url(#smgm)"/></mask>
<linearGradient id="kbm" x1="0.3" y1="0" x2="0.7" y2="1">
<stop offset="0" stop-color="#c8c8c8"/><stop offset="0.5" stop-color="#a2a2a2"/><stop offset="1" stop-color="#5c5c5c"/></linearGradient>
<radialGradient id="kom" cx="0.5" cy="0.5" r="0.5">
<stop offset="0.895" stop-color="#000" stop-opacity="0.45"/><stop offset="0.925" stop-color="#000" stop-opacity="0"/><stop offset="0.96" stop-color="#000" stop-opacity="0.05"/><stop offset="1" stop-color="#000" stop-opacity="0.6"/></radialGradient>
<radialGradient id="ksm" cx="0.5" cy="0.5" r="0.5">
<stop offset="0.9" stop-color="#000" stop-opacity="0.7"/><stop offset="1" stop-color="#000" stop-opacity="0"/></radialGradient>
</defs>
<circle cx="1373.0" cy="542.2" r="254" fill="url(#r1m)"/>
<circle cx="1373.0" cy="542.2" r="227" fill="url(#r2m)" stroke="#fbfcfc" stroke-width="1.6"/>
<circle cx="1373.0" cy="542.2" r="214" fill="url(#fcm)"/>
<circle cx="1373.0" cy="542.2" r="214" fill="url(#stm)" mask="url(#smm)"/>
<path stroke="#f2f2f2" stroke-width="2.3" d="M1267.6,647.6L1253.5,661.7M1262.3,641.9L1256.7,646.9M1257.2,636.0L1251.4,640.7M1252.5,629.8L1236.3,641.5M1248.0,623.4L1241.7,627.4M1244.0,616.7L1237.5,620.5M1240.2,609.8L1222.4,618.9M1236.9,602.8L1230.0,605.9M1233.9,595.6L1226.9,598.3M1231.3,588.2L1212.3,594.4M1229.1,580.8L1221.8,582.7M1227.3,573.2L1219.9,574.7M1225.8,565.5L1206.1,568.6M1224.8,557.8L1217.4,558.6M1224.2,550.0L1216.7,550.4M1224.0,542.2L1204.0,542.2M1224.2,534.4L1216.7,534.0M1224.8,526.6L1217.4,525.8M1225.8,518.9L1206.1,515.8M1227.3,511.2L1219.9,509.7M1229.1,503.6L1221.8,501.7M1231.3,496.2L1212.3,490.0M1233.9,488.8L1226.9,486.1M1236.9,481.6L1230.0,478.5M1240.2,474.6L1222.4,465.5M1244.0,467.7L1237.5,464.0M1248.0,461.0L1241.7,457.0M1252.5,454.6L1236.3,442.9M1257.2,448.4L1251.4,443.7M1262.3,442.5L1256.7,437.5M1267.6,436.8L1253.5,422.7M1273.3,431.5L1268.3,425.9M1279.2,426.4L1274.5,420.6M1285.4,421.7L1273.7,405.5M1291.8,417.2L1287.8,410.9M1298.5,413.2L1294.8,406.7M1305.4,409.4L1296.3,391.6M1312.4,406.1L1309.3,399.2M1319.6,403.1L1316.9,396.1M1327.0,400.5L1320.8,381.5M1334.4,398.3L1332.5,391.0M1342.0,396.5L1340.5,389.1M1349.7,395.0L1346.6,375.3M1357.4,394.0L1356.6,386.6M1365.2,393.4L1364.8,385.9M1373.0,393.2L1373.0,373.2M1380.8,393.4L1381.2,385.9M1388.6,394.0L1389.4,386.6M1396.3,395.0L1399.4,375.3M1404.0,396.5L1405.5,389.1M1411.6,398.3L1413.5,391.0M1419.0,400.5L1425.2,381.5M1426.4,403.1L1429.1,396.1M1433.6,406.1L1436.7,399.2M1440.6,409.4L1449.7,391.6M1447.5,413.2L1451.2,406.7M1454.2,417.2L1458.2,410.9M1460.6,421.7L1472.3,405.5M1466.8,426.4L1471.5,420.6M1472.7,431.5L1477.7,425.9M1478.4,436.8L1492.5,422.7M1483.7,442.5L1489.3,437.5M1488.8,448.4L1494.6,443.7M1493.5,454.6L1509.7,442.9M1498.0,461.0L1504.3,457.0M1502.0,467.7L1508.5,464.0M1505.8,474.6L1523.6,465.5M1509.1,481.6L1516.0,478.5M1512.1,488.8L1519.1,486.1M1514.7,496.2L1533.7,490.0M1516.9,503.6L1524.2,501.7M1518.7,511.2L1526.1,509.7M1520.2,518.9L1539.9,515.8M1521.2,526.6L1528.6,525.8M1521.8,534.4L1529.3,534.0M1522.0,542.2L1542.0,542.2M1521.8,550.0L1529.3,550.4M1521.2,557.8L1528.6,558.6M1520.2,565.5L1539.9,568.6M1518.7,573.2L1526.1,574.7M1516.9,580.8L1524.2,582.7M1514.7,588.2L1533.7,594.4M1512.1,595.6L1519.1,598.3M1509.1,602.8L1516.0,605.9M1505.8,609.8L1523.6,618.9M1502.0,616.7L1508.5,620.5M1498.0,623.4L1504.3,627.4M1493.5,629.8L1509.7,641.5M1488.8,636.0L1494.6,640.7M1483.7,641.9L1489.3,646.9M1478.4,647.6L1492.5,661.7"/>
<g fill="#fff" font-family="Liberation Sans" font-weight="bold" font-style="italic">
<text x="1279" y="640.6" font-size="20" textLength="35">min</text>
<text x="1434" y="640.6" font-size="20" textLength="37.5">max</text>
<text x="1327" y="687.5" font-size="20.4" textLength="92">VOLUME</text>
</g>
<circle cx="1373.0" cy="542.2" r="101.5" fill="url(#ksm)"/>
<circle cx="1373.0" cy="542.2" r="98" fill="url(#kbm)"/>
<circle cx="1373.0" cy="542.2" r="98" fill="url(#kom)"/>
<path fill="#1ba7e5" d="M1271.2,640.9L1305,569.6L1345,605.5Z"/>
<foreignObject x="1285.0" y="454.2" width="176" height="176"><div style="width:176px;height:176px;border-radius:50%;background:conic-gradient(from 0deg,#f4f4f4 0deg,#e6e6e6 8deg,#c4c4c4 26deg,#d2d2d2 42deg,#c8c8c8 58deg,#e8e8e8 76deg,#f8f8f8 90deg,#e6e6e6 104deg,#bababa 124deg,#d4d4d4 146deg,#cdcdcd 160deg,#ececec 172deg,#f8f8f8 182deg,#e4e4e4 194deg,#bcbcbc 214deg,#d4d4d4 234deg,#c8c8c8 248deg,#eaeaea 262deg,#f8f8f8 272deg,#e2e2e2 286deg,#bababa 304deg,#d2d2d2 324deg,#cacaca 338deg,#e8e8e8 352deg,#f4f4f4 360deg)"></div></foreignObject></svg><svg class="a" style="left:33.50px;top:166.30px" width="252.14" height="141.83" viewBox="381 160.5 1360 765"><path fill="#00adef" d="M515.3,469.4H584.1V540.4L647.2,469.4H724.7L651.4,554L728.9,677H648L604.4,605.9L584.1,627.7V677H515.3Z"/>
<path fill="#00adef" fill-rule="evenodd" d="M745,469.2H845C903,469.2 927.4,497 927.4,545.5C927.4,594 903,622.9 847,622.9H813.7V677H745Z M813.7,521.3H839.5C853.5,521.3 862.4,530.5 862.4,543V549C862.4,561.5 853.5,570.7 839.5,570.7H813.7Z"/>
<rect fill="#00adef" x="948.6" y="469.4" width="69" height="207.6"/>
<path fill="none" stroke="#00adef" stroke-width="7.7" d="M518.8,706.2V762.9H540A32,28.35 0 0 0 540,706.2Z M629.5,716.8V766.8 M629.5,741.8A21.1,21.1 0 1 1 587.3,741.8A21.1,21.1 0 1 1 629.5,741.8 M677.8,725C674.5,722.5 669,721.4 663.5,721.4C655,721.4 649.5,725 649.5,731C649.5,745 678,737 678,752.5C678,759 672,763 663.5,763C656,763 650.5,760 647.5,755.5 M697.2,698V766.8 M697.2,742C697.2,728 705,720.7 716,720.7C727.5,720.7 734.8,728 734.8,740V766.8 M759,697.8V767.3 M759,742.5A21.3,21.1 0 1 1 801.6,742.5A21.3,21.1 0 1 1 759,742.5 M858.6,742.5A20.8,20.8 0 1 1 817,742.5A20.8,20.8 0 1 1 858.6,742.5 M917.2,717.8V767.3 M917.2,742.5A20.85,21.1 0 1 1 875.5,742.5A20.85,21.1 0 1 1 917.2,742.5 M942.2,717.8V767.3 M942.2,742C942.2,728 950,721.6 963.8,721.6 M1015.1,697.8V767.3 M1015.1,742.5A21.4,21.1 0 1 1 972.3,742.5A21.4,21.1 0 1 1 1015.1,742.5"/><defs>
<linearGradient id="r1t" x1="0" y1="0" x2="0" y2="1">
<stop offset="0" stop-color="#eef1f3"/><stop offset="0.3" stop-color="#e3e6e8"/><stop offset="0.55" stop-color="#c1c4c7"/><stop offset="0.8" stop-color="#93979a"/><stop offset="1" stop-color="#73787c"/></linearGradient>
<linearGradient id="r2t" x1="0" y1="0" x2="0" y2="1">
<stop offset="0" stop-color="#6e7276"/><stop offset="0.45" stop-color="#b3b6b9"/><stop offset="0.75" stop-color="#dfe2e4"/><stop offset="1" stop-color="#edf0f2"/></linearGradient>
<radialGradient id="fct" cx="0.5" cy="0.5" r="0.5">
<stop offset="0" stop-color="#262626"/><stop offset="0.45" stop-color="#1c1c1c"/><stop offset="0.62" stop-color="#121212"/><stop offset="0.8" stop-color="#070707"/><stop offset="1" stop-color="#020202"/></radialGradient>
<pattern id="stt" width="9" height="400" patternUnits="userSpaceOnUse" patternTransform="rotate(28)">
<rect x="0" y="0" width="4" height="400" fill="#ffffff" fill-opacity="0.02"/></pattern>
<radialGradient id="smgt" cx="0.5" cy="0.5" r="0.5"><stop offset="0.4" stop-color="#fff"/><stop offset="0.75" stop-color="#000"/></radialGradient><mask id="smt"><circle cx="1373" cy="542.2" r="214" fill="url(#smgt)"/></mask>
<linearGradient id="kbt" x1="0.3" y1="0" x2="0.7" y2="1">
<stop offset="0" stop-color="#c8c8c8"/><stop offset="0.5" stop-color="#a2a2a2"/><stop offset="1" stop-color="#5c5c5c"/></linearGradient>
<radialGradient id="kot" cx="0.5" cy="0.5" r="0.5">
<stop offset="0.895" stop-color="#000" stop-opacity="0.45"/><stop offset="0.925" stop-color="#000" stop-opacity="0"/><stop offset="0.96" stop-color="#000" stop-opacity="0.05"/><stop offset="1" stop-color="#000" stop-opacity="0.6"/></radialGradient>
<radialGradient id="kst" cx="0.5" cy="0.5" r="0.5">
<stop offset="0.9" stop-color="#000" stop-opacity="0.7"/><stop offset="1" stop-color="#000" stop-opacity="0"/></radialGradient>
</defs>
<circle cx="1373.0" cy="542.2" r="254" fill="url(#r1t)"/>
<circle cx="1373.0" cy="542.2" r="227" fill="url(#r2t)" stroke="#fbfcfc" stroke-width="1.6"/>
<circle cx="1373.0" cy="542.2" r="214" fill="url(#fct)"/>
<circle cx="1373.0" cy="542.2" r="214" fill="url(#stt)" mask="url(#smt)"/>
<path stroke="#f2f2f2" stroke-width="2.3" d="M1267.6,647.6L1253.5,661.7M1262.3,641.9L1256.7,646.9M1257.2,636.0L1251.4,640.7M1252.5,629.8L1236.3,641.5M1248.0,623.4L1241.7,627.4M1244.0,616.7L1237.5,620.5M1240.2,609.8L1222.4,618.9M1236.9,602.8L1230.0,605.9M1233.9,595.6L1226.9,598.3M1231.3,588.2L1212.3,594.4M1229.1,580.8L1221.8,582.7M1227.3,573.2L1219.9,574.7M1225.8,565.5L1206.1,568.6M1224.8,557.8L1217.4,558.6M1224.2,550.0L1216.7,550.4M1224.0,542.2L1204.0,542.2M1224.2,534.4L1216.7,534.0M1224.8,526.6L1217.4,525.8M1225.8,518.9L1206.1,515.8M1227.3,511.2L1219.9,509.7M1229.1,503.6L1221.8,501.7M1231.3,496.2L1212.3,490.0M1233.9,488.8L1226.9,486.1M1236.9,481.6L1230.0,478.5M1240.2,474.6L1222.4,465.5M1244.0,467.7L1237.5,464.0M1248.0,461.0L1241.7,457.0M1252.5,454.6L1236.3,442.9M1257.2,448.4L1251.4,443.7M1262.3,442.5L1256.7,437.5M1267.6,436.8L1253.5,422.7M1273.3,431.5L1268.3,425.9M1279.2,426.4L1274.5,420.6M1285.4,421.7L1273.7,405.5M1291.8,417.2L1287.8,410.9M1298.5,413.2L1294.8,406.7M1305.4,409.4L1296.3,391.6M1312.4,406.1L1309.3,399.2M1319.6,403.1L1316.9,396.1M1327.0,400.5L1320.8,381.5M1334.4,398.3L1332.5,391.0M1342.0,396.5L1340.5,389.1M1349.7,395.0L1346.6,375.3M1357.4,394.0L1356.6,386.6M1365.2,393.4L1364.8,385.9M1373.0,393.2L1373.0,373.2M1380.8,393.4L1381.2,385.9M1388.6,394.0L1389.4,386.6M1396.3,395.0L1399.4,375.3M1404.0,396.5L1405.5,389.1M1411.6,398.3L1413.5,391.0M1419.0,400.5L1425.2,381.5M1426.4,403.1L1429.1,396.1M1433.6,406.1L1436.7,399.2M1440.6,409.4L1449.7,391.6M1447.5,413.2L1451.2,406.7M1454.2,417.2L1458.2,410.9M1460.6,421.7L1472.3,405.5M1466.8,426.4L1471.5,420.6M1472.7,431.5L1477.7,425.9M1478.4,436.8L1492.5,422.7M1483.7,442.5L1489.3,437.5M1488.8,448.4L1494.6,443.7M1493.5,454.6L1509.7,442.9M1498.0,461.0L1504.3,457.0M1502.0,467.7L1508.5,464.0M1505.8,474.6L1523.6,465.5M1509.1,481.6L1516.0,478.5M1512.1,488.8L1519.1,486.1M1514.7,496.2L1533.7,490.0M1516.9,503.6L1524.2,501.7M1518.7,511.2L1526.1,509.7M1520.2,518.9L1539.9,515.8M1521.2,526.6L1528.6,525.8M1521.8,534.4L1529.3,534.0M1522.0,542.2L1542.0,542.2M1521.8,550.0L1529.3,550.4M1521.2,557.8L1528.6,558.6M1520.2,565.5L1539.9,568.6M1518.7,573.2L1526.1,574.7M1516.9,580.8L1524.2,582.7M1514.7,588.2L1533.7,594.4M1512.1,595.6L1519.1,598.3M1509.1,602.8L1516.0,605.9M1505.8,609.8L1523.6,618.9M1502.0,616.7L1508.5,620.5M1498.0,623.4L1504.3,627.4M1493.5,629.8L1509.7,641.5M1488.8,636.0L1494.6,640.7M1483.7,641.9L1489.3,646.9M1478.4,647.6L1492.5,661.7"/>
<g fill="#fff" font-family="Liberation Sans" font-weight="bold" font-style="italic">
<text x="1279" y="640.6" font-size="20" textLength="35">min</text>
<text x="1434" y="640.6" font-size="20" textLength="37.5">max</text>
<text x="1327" y="687.5" font-size="20.4" textLength="92">VOLUME</text>
</g>
<circle cx="1373.0" cy="542.2" r="101.5" fill="url(#kst)"/>
<circle cx="1373.0" cy="542.2" r="98" fill="url(#kbt)"/>
<circle cx="1373.0" cy="542.2" r="98" fill="url(#kot)"/>
<path fill="#1ba7e5" d="M1271.2,640.9L1305,569.6L1345,605.5Z"/>
<foreignObject x="1285.0" y="454.2" width="176" height="176"><div style="width:176px;height:176px;border-radius:50%;background:conic-gradient(from 0deg,#f4f4f4 0deg,#e6e6e6 8deg,#c4c4c4 26deg,#d2d2d2 42deg,#c8c8c8 58deg,#e8e8e8 76deg,#f8f8f8 90deg,#e6e6e6 104deg,#bababa 124deg,#d4d4d4 146deg,#cdcdcd 160deg,#ececec 172deg,#f8f8f8 182deg,#e4e4e4 194deg,#bcbcbc 214deg,#d4d4d4 234deg,#c8c8c8 248deg,#eaeaea 262deg,#f8f8f8 272deg,#e2e2e2 286deg,#bababa 304deg,#d2d2d2 324deg,#cacaca 338deg,#e8e8e8 352deg,#f4f4f4 360deg)"></div></foreignObject></svg><div class="a" style="left:307px;top:946px;width:1487px;height:1px;background:#d0d0d0"></div>
<div class="a" style="left:0;top:947px;width:1794px;height:3px;background:#eaeaea"></div>
<div class="a" style="left:0;top:950px;width:1794px;height:1px;background:#d3d3d3"></div>
<div class="a" style="left:0;top:951px;width:1794px;height:19px;background:#f2f2f2"></div>
<div class="a" style="left:7.5px;top:954.2px;font-size:11.5px;line-height:11.5px;color:#555;letter-spacing:-0.42px;">Slide 1 of 1</div>
<svg class="a" style="left:77.5px;top:953px" width="15" height="13" viewBox="0 0 15 13" ><path d="M0.5,1.5C2.5,0.5 4.5,0.5 6.5,1.5V11.5C4.5,10.5 2.5,10.5 0.5,11.5Z M6.5,1.5C8,0.8 9.5,0.6 11,0.8M6.5,11.5C7.5,11 8.5,10.8 9.5,10.8" fill="none" stroke="#777" stroke-width="1"/><path d="M8.5,6L10.2,8L13.5,3.5" fill="none" stroke="#777" stroke-width="1.1"/></svg>
<svg class="a" style="left:1406.5px;top:953.5px" width="12" height="12" viewBox="0 0 12 12" ><path d="M3,3.5L5.7,0.8L8.4,3.5Z" fill="#666"/><path d="M0.5,5.5H11M0.5,7.8H11M0.5,10.1H9M1.5,11.8H6" stroke="#777" stroke-width="1"/></svg>
<div class="a" style="left:1422.7px;top:954.5px;font-size:11.5px;line-height:11.5px;color:#555;letter-spacing:-0.68px;">Notes</div>
<div class="a" style="left:1468.4px;top:950px;width:34.2px;height:20px;background:#c8c8c8"></div>
<svg class="a" style="left:1479.5px;top:953px" width="14" height="12" viewBox="0 0 14 12" ><rect x="0.5" y="0.5" width="12.5" height="11" fill="none" stroke="#666" stroke-width="1"/><path d="M3.5,0.5V11.5M3.5,9H13" stroke="#666" stroke-width="1"/><rect x="6" y="3" width="4" height="3" fill="none" stroke="#666" stroke-width="0.9"/></svg>
<svg class="a" style="left:1515px;top:953px" width="13" height="12" viewBox="0 0 13 12" ><rect x="0.5" y="0.5" width="4.5" height="4" fill="none" stroke="#666" stroke-width="1"/><rect x="7.5" y="0.5" width="4.5" height="4" fill="none" stroke="#666" stroke-width="1"/><rect x="0.5" y="7.5" width="4.5" height="4" fill="none" stroke="#666" stroke-width="1"/><rect x="7.5" y="7.5" width="4.5" height="4" fill="none" stroke="#666" stroke-width="1"/></svg>
<svg class="a" style="left:1549.5px;top:953px" width="13" height="12" viewBox="0 0 13 12" ><path d="M0.5,1.5C2.5,0.5 4.5,0.5 6.3,1.5C8,0.5 10,0.5 12.2,1.5V11.5C10,10.5 8,10.5 6.3,11.5C4.5,10.5 2.5,10.5 0.5,11.5Z M6.3,1.5V11.5M2,4H5M2,6H5M2,8H5M7.6,4H10.8M7.6,6H10.8M7.6,8H10.8" fill="none" stroke="#666" stroke-width="0.9"/></svg>
<svg class="a" style="left:1585px;top:953px" width="13" height="13" viewBox="0 0 13 13" ><path d="M0.5,1H12.5" stroke="#666" stroke-width="1.2"/><rect x="1.5" y="1" width="10" height="6.5" fill="none" stroke="#666" stroke-width="1"/><path d="M6.5,7.5V11.5M4,12H9" stroke="#666" stroke-width="1"/></svg>
<div class="a" style="left:1614px;top:959px;width:6px;height:1.5px;background:#666"></div>
<div class="a" style="left:1624px;top:959.5px;width:92.6px;height:1px;background:#aaa"></div>
<div class="a" style="left:1671px;top:954px;width:4.5px;height:10.5px;background:#666;border-radius:1px"></div>
<div class="a" style="left:1720.6px;top:959px;width:7px;height:1.5px;background:#666"></div>
<div class="a" style="left:1723.4px;top:956px;width:1.5px;height:7.5px;background:#666"></div>
<div class="a" style="left:1738.6px;top:954.5px;font-size:11.5px;line-height:11.5px;color:#555;letter-spacing:-1.07px;">114%</div>
<svg class="a" style="left:1775.5px;top:954px" width="14" height="13" viewBox="0 0 14 13" ><rect x="0.5" y="0.5" width="12.5" height="12" fill="none" stroke="#666" stroke-width="1"/><path d="M6.75,2.5V5M6.75,8V10.5M2.5,6.5H5M8.5,6.5H11M5.5,3.8L6.75,2.5L8,3.8M5.5,9.2L6.75,10.5L8,9.2M3.8,5.2L2.5,6.5L3.8,7.8M9.7,5.2L11,6.5L9.7,7.8" fill="none" stroke="#666" stroke-width="0.9"/></svg>
<svg class="a" style="left:1782px;top:152px" width="8" height="6" viewBox="0 0 8 6" ><path d="M0.5,5L4,1L7.5,5Z" fill="#666"/></svg>
<svg class="a" style="left:1782px;top:883px" width="8" height="6" viewBox="0 0 8 6" ><path d="M0.5,1H7.5L4,5Z" fill="#666"/></svg>
<svg class="a" style="left:1782px;top:897.5px" width="8" height="10" viewBox="0 0 8 10" ><path d="M0.5,4.5L4,0.8L7.5,4.5Z M0.5,9L4,5.3L7.5,9Z" fill="#666"/></svg>
<svg class="a" style="left:1782px;top:913px" width="8" height="10" viewBox="0 0 8 10" ><path d="M0.5,0.8H7.5L4,4.5Z M0.5,5.3H7.5L4,9Z" fill="#666"/></svg>
<svg class="a" style="left:9.5px;top:179.5px" width="10" height="10" viewBox="0 0 10 10" ><path d="M5,0.5L6.2,3.6H9.5L6.9,5.7L7.9,9L5,7L2.1,9L3.1,5.7L0.5,3.6H3.8Z" fill="#555"/></svg></body></html>
